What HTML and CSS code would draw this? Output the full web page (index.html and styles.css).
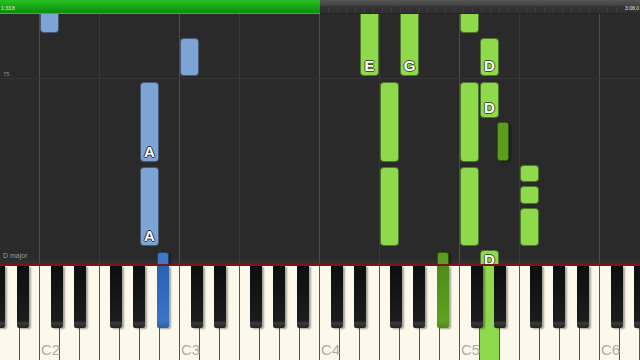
FILE: index.html
```html
<!DOCTYPE html>
<html lang="en">
<head>
  <meta charset="UTF-8">
  <meta name="viewport" content="width=device-width, initial-scale=1.0">
  <title>Piano Roll</title>
  <link rel="stylesheet" href="styles.css">
</head>
<body>
  <div class="player">
    <!-- Barra de progresso -->
    <div class="progress">
      <div class="progress-done"><span class="time">1:33.8</span></div>
      <div class="progress-rest"><span class="time">3:08.0</span></div>
    </div>

    <!-- Notas caindo -->
    <div class="roll" id="roll">
      <span class="roll-label measure">75</span>
      <span class="roll-label key-sig">D major</span>
    </div>

    <!-- Teclado -->
    <div class="keyboard">
      <div class="keys" id="keys"></div>
    </div>
  </div>

  <script>
    // x, top, altura, mao, letra
    const notes = [
      [40, -6, 25, 'lh'],
      [180, 24, 38, 'lh'],
      [140, 68, 80, 'lh', 'A'],
      [140, 153, 79, 'lh', 'A'],
      [157, 238, 14, 'lh black'],
      [360, -6, 68, 'rh', 'E'],
      [400, -6, 68, 'rh', 'G'],
      [460, -6, 25, 'rh'],
      [480, 24, 38, 'rh', 'D'],
      [380, 68, 80, 'rh'],
      [460, 68, 80, 'rh'],
      [480, 68, 36, 'rh', 'D'],
      [497, 108, 39, 'rh black'],
      [520, 151, 17, 'rh'],
      [520, 172, 18, 'rh'],
      [520, 194, 38, 'rh'],
      [380, 153, 79, 'rh'],
      [460, 153, 79, 'rh'],
      [437, 238, 14, 'rh black'],
      [480, 236, 20, 'rh', 'D']
    ];

    const roll = document.getElementById('roll');
    notes.forEach(n => {
      const div = document.createElement('div');
      div.className = 'note ' + n[3];
      div.style.left = n[0] + 'px';
      div.style.top = n[1] + 'px';
      div.style.height = n[2] + 'px';
      if (n[4]) div.innerHTML = `<span class="note-name">${n[4]}</span>`;
      roll.appendChild(div);
    });

    const whites = ['C', 'D', 'E', 'F', 'G', 'A', 'B'];
    const blacks = ['Cs', 'Ds', 'Fs', 'Gs', 'As'];
    const pressed = { As2: 'lh', As4: 'rh', D5: 'rh' };

    const keys = document.getElementById('keys');
    for (let o = 1; o <= 6; o++) {
      const oct = document.createElement('div');
      oct.className = 'octave';
      whites.forEach(w => {
        const k = document.createElement('div');
        k.className = 'white' + (pressed[w + o] ? ' down-' + pressed[w + o] : '');
        if (w === 'C' && o > 1) k.innerHTML = `<span class="key-label">C${o}</span>`;
        oct.appendChild(k);
      });
      blacks.forEach(b => {
        const k = document.createElement('div');
        k.className = 'black bk-' + b + (pressed[b + o] ? ' down-' + pressed[b + o] : '');
        oct.appendChild(k);
      });
      keys.appendChild(oct);
    }
  </script>
</body>
</html>
```

FILE: styles.css
```css
* { box-sizing: border-box; }

body {
  margin: 0;
  background: #2a2a2a;
  font-family: "Liberation Sans", Arial, sans-serif;
  overflow: hidden;
}

.player {
  width: 640px;
  height: 360px;
  display: flex;
  flex-direction: column;
  overflow: hidden;
}

/* Barra de progresso */
.progress {
  height: 14px;
  display: flex;
  flex-shrink: 0;
}

.progress-done {
  width: 320px;
  background: linear-gradient(#2cc024, #14a514 55%, #0b8c0b);
  border-bottom: 1px solid #27c727;
  display: flex;
  align-items: flex-end;
  padding: 0 0 2px 1px;
}

.progress-rest {
  flex: 1;
  background:
    repeating-linear-gradient(to right, transparent 0 8px, rgba(255,255,255,0.06) 8px 9px) bottom / 100% 6px no-repeat,
    linear-gradient(#555 0, #444 40%, #343434 50%, #2e2e2e);
  border-bottom: 1px solid #262626;
  display: flex;
  align-items: flex-end;
  justify-content: flex-end;
  padding: 0 1px 2px 0;
}

.time {
  font-size: 5px;
  line-height: 5px;
  color: #e8e8e8;
}

/* Area das notas */
.roll {
  position: relative;
  height: 250px;
  flex-shrink: 0;
  background-color: #2a2a2a;
  background-image:
    linear-gradient(to right, #4c4c4c 0 1px, transparent 1px 60px, #383838 60px 61px, transparent 61px);
  background-size: 140px 100%;
  background-position: 39px 0;
  overflow: hidden;
}

.roll::before {
  content: "";
  position: absolute;
  left: 0;
  right: 0;
  top: 64px;
  height: 1px;
  background: #353535;
}

.roll::after {
  content: "";
  position: absolute;
  left: 0;
  right: 0;
  bottom: 0;
  height: 6px;
  background: linear-gradient(rgba(70,60,60,0), rgba(70,60,60,0.5));
}

.roll-label {
  position: absolute;
  left: 3px;
  color: #8a8a8a;
  font-size: 6px;
}

.measure { top: 57px; }
.key-sig { top: 238px; font-size: 7px; color: #9a9a9a; }

.note {
  position: absolute;
  width: 19px;
  border-radius: 4px;
  border: 1px solid rgba(0, 0, 0, 0.45);
  display: flex;
  align-items: flex-end;
  justify-content: center;
  padding-bottom: 2px;
  z-index: 1;
}

.note.lh { background: #7ea4d6; }
.note.rh { background: #8fd94d; }
.note.black { width: 12px; border-radius: 3px; }
.note.lh.black { background: #3d78c9; }
.note.rh.black { background: #5b9e1e; }

.note-name {
  font-size: 15px;
  font-weight: bold;
  line-height: 15px;
  color: #fff;
}

.note.rh .note-name {
  text-shadow: 1px 0 #3b5a22, -1px 0 #3b5a22, 0 1px #3b5a22, 0 -1px #3b5a22;
}

.note.lh .note-name {
  text-shadow: 1px 0 #24354f, -1px 0 #24354f, 0 1px #24354f, 0 -1px #24354f;
}

/* Teclado */
.keyboard {
  flex: 1;
  border-top: 2px solid #7c1616;
  overflow: hidden;
  background: #fcf9ec;
}

.keys {
  display: flex;
  margin-left: -101px;
  height: 100%;
}

.octave {
  position: relative;
  display: flex;
  flex-shrink: 0;
  width: 140px;
}

.white {
  position: relative;
  width: 20px;
  height: 100%;
  background: #fcf9ec;
  border-left: 1px solid #555;
}

.white.down-rh { background: #8fd94d; }
.white.down-lh { background: #7ea4d6; }

.key-label {
  position: absolute;
  left: 1px;
  bottom: 2px;
  font-size: 15px;
  color: #b3ad9f;
  z-index: 3;
}

.black {
  position: absolute;
  top: 0;
  width: 12px;
  height: 62px;
  background: linear-gradient(to bottom, #0e0e0e, #1c1c1c 88%, #3a3a3a 92%, #222);
  border-radius: 0 0 2px 2px;
  box-shadow: 2px 1px 2px rgba(0, 0, 0, 0.35);
  z-index: 2;
}

.black.down-lh { background: linear-gradient(to bottom, #2a62b3, #3a74c4 88%, #3a6cb0 92%, #2e5f9e); }
.black.down-rh { background: linear-gradient(to bottom, #4e8c17, #5ea120 88%, #5a9a1e 92%, #4f8a18); }

.bk-Cs { left: 12px; }
.bk-Ds { left: 35px; }
.bk-Fs { left: 71px; }
.bk-Gs { left: 94px; }
.bk-As { left: 118px; }
```
